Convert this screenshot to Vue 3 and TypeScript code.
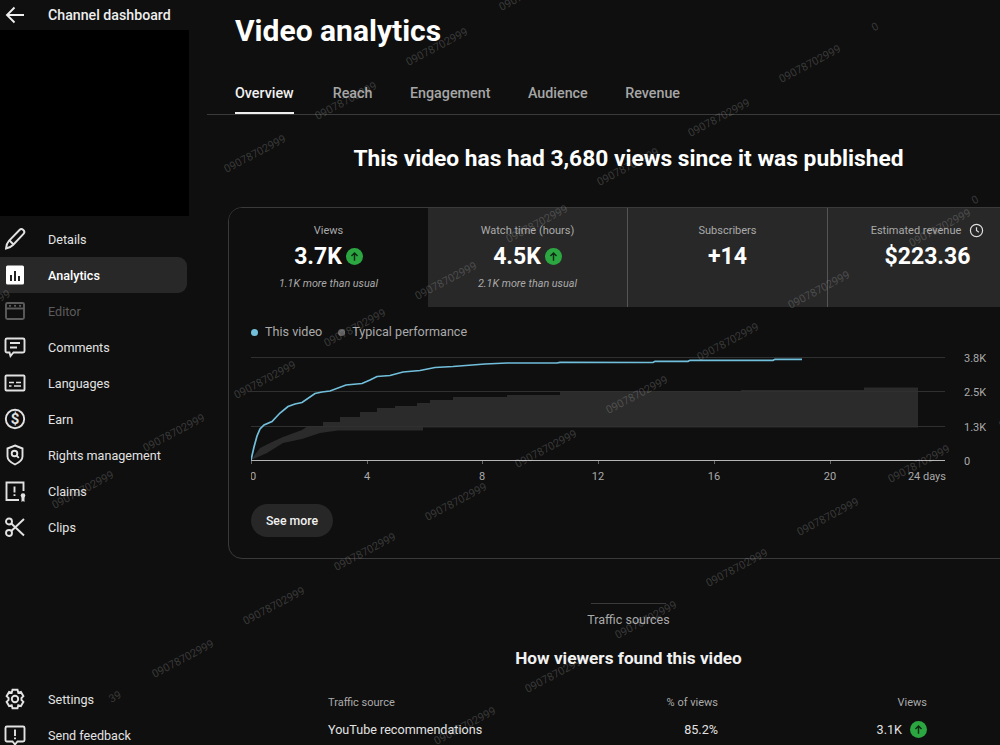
<script setup lang="ts">
type Tile = { label: string; value: string; up?: boolean; note?: string; clock?: boolean }

const navItems = [
  { key: 'details', label: 'Details' },
  { key: 'analytics', label: 'Analytics' },
  { key: 'editor', label: 'Editor' },
  { key: 'comments', label: 'Comments' },
  { key: 'languages', label: 'Languages' },
  { key: 'earn', label: 'Earn' },
  { key: 'rights', label: 'Rights management' },
  { key: 'claims', label: 'Claims' },
  { key: 'clips', label: 'Clips' },
]

const tabs = ['Overview', 'Reach', 'Engagement', 'Audience', 'Revenue']

const tiles: Tile[] = [
  { label: 'Views', value: '3.7K', up: true, note: '1.1K more than usual' },
  { label: 'Watch time (hours)', value: '4.5K', up: true, note: '2.1K more than usual' },
  { label: 'Subscribers', value: '+14' },
  { label: 'Estimated revenue', value: '$223.36', clock: true },
]

// chart coordinates are page px minus the svg origin (251, 350)
const ox = 251
const oy = 350
const curve: [number, number][] = [
  [251, 460], [254, 447], [257, 436], [260, 429], [264, 425], [272, 421.5], [280, 413], [288, 406.5], [295, 404],
  [302, 402.5], [315, 393.5], [322, 392], [330, 391], [346, 385], [362, 383.5], [370, 380], [377, 376.5],
  [390, 375.5], [403, 372], [420, 370.5], [435, 367.5], [453, 366.5], [485, 364], [507, 363], [557, 363],
  [560, 362.3], [653, 362.5], [655, 361.3], [688, 361.3], [690, 360.3], [773, 360.3], [775, 359.3], [802, 359.3],
]
const curvePoints = curve.map(([x, y]) => `${x - ox},${y - oy}`).join(' ')

const typical: [number, number][] = [
  [251, 460], [260, 448], [272, 442], [283, 437], [302, 430], [308, 426], [323, 426], [323, 422], [340, 422], [340, 417],
  [360, 417], [360, 412], [377, 412], [377, 408], [395, 408], [395, 406], [417, 406], [417, 403], [430, 403],
  [430, 400], [453, 400], [453, 397], [507, 397], [507, 395], [560, 395], [560, 392], [741, 392], [741, 390],
  [864, 390], [864, 387.5], [918, 387.5], [918, 427.5], [423, 427.5], [423, 430.5], [338, 430.5], [320, 433],
  [302, 439], [283, 443], [267, 453],
]
const typicalPoints = typical.map(([x, y]) => `${x - ox},${y - oy}`).join(' ')

const gridLines = [
  { y: 7.5, label: '3.8K' },
  { y: 41.5, label: '2.5K' },
  { y: 76.5, label: '1.3K' },
]
const xTicks = [
  { x: 0, label: '0' },
  { x: 116, label: '4' },
  { x: 231, label: '8' },
  { x: 347, label: '12' },
  { x: 463, label: '16' },
  { x: 579, label: '20' },
]

// watermark centres, in page px
const stamps: [number, number][] = [
  [530, -8], [437, 47], [346, 101], [255, 154], [810, 64], [719, 118], [628, 167], [537, 224], [446, 281], [355, 328],
  [265, 380], [174, 433], [83, 490], [819, 290], [728, 342], [637, 395], [546, 449], [456, 502], [365, 552],
  [274, 606], [183, 659], [919, 464], [828, 517], [737, 568], [646, 620], [556, 674], [465, 726], [940, 228], [1030, 410],
]
</script>

<template>
  <div class="page">
    <aside class="side">
      <div class="back">
        <svg class="ico" viewBox="0 0 24 24" fill="none" stroke="currentColor" stroke-width="1.9">
          <path d="M21 12H4M11.5 4.5 4 12l7.500 7.500" />
        </svg>
        <span>Channel dashboard</span>
      </div>
      <div class="thumb"></div>
      <nav class="nav">
        <a
          v-for="item in navItems"
          :key="item.key"
          class="nav-item"
          :class="{ active: item.key === 'analytics', muted: item.key === 'editor' }"
        >
          <svg class="ico" viewBox="0 0 24 24" fill="none" stroke="currentColor" stroke-width="1.9">
            <template v-if="item.key === 'details'">
              <path d="M3 21.500c.2-3 1-5.600 2.900-7.600L16.500 3c1-1 2.700-1 3.800 0s1.200 2.800.2 3.900L10 18c-2 2-4.200 3-7 3.500Z" />
              <path d="m6.500 13.500 4 4" />
            </template>
            <template v-else-if="item.key === 'analytics'">
              <rect x="3" y="2.500" width="18" height="19" rx="1.500" fill="#fff" stroke="none" />
              <path d="M8 12v6M12 8v10M16 13v5" stroke="#222" stroke-width="2" />
            </template>
            <template v-else-if="item.key === 'editor'">
              <rect x="3" y="4" width="18" height="16" rx="1.500" />
              <path d="M3 9.500h18" />
              <path d="M7 6.800h.1M12 6.800h.1M17 6.800h.1" stroke-width="2.200" stroke-linecap="round" />
            </template>
            <template v-else-if="item.key === 'comments'">
              <path d="M4 3.500h16c.8 0 1.500.7 1.500 1.500v11c0 .8-.7 1.500-1.500 1.500H10.500l-3 3.500-1-3.500H4c-.8 0-1.500-.7-1.500-1.500V5c0-.8.7-1.500 1.500-1.500Z" />
              <path d="M7 8h10M7 12.500h7" />
            </template>
            <template v-else-if="item.key === 'languages'">
              <rect x="2.500" y="4.500" width="19" height="15" rx="1" />
              <path d="M6 11.500h5M13 11.500h5M6 15h2.500M11 15h7" stroke-width="1.500" />
            </template>
            <template v-else-if="item.key === 'earn'">
              <circle cx="12" cy="12" r="9.200" />
              <text x="12" y="17.200" text-anchor="middle" class="dollar" fill="currentColor" stroke="none">$</text>
            </template>
            <template v-else-if="item.key === 'rights'">
              <path d="M12 2.500 19.500 5.500v8c0 3.400-3.200 6-7.500 8-4.300-2-7.500-4.600-7.500-8v-8Z" />
              <circle cx="11.500" cy="10.500" r="2.800" />
              <path d="m13.600 12.600 2.200 2.200" />
            </template>
            <template v-else-if="item.key === 'claims'">
              <path d="M20.500 12V3.500H3.500v17.500h12.500" />
              <path d="M11.500 7.500v6M11.500 15.200v1.800" />
              <circle cx="20" cy="16.500" r="2.300" fill="currentColor" stroke="none" />
              <path d="M18.500 18v5l1.500-1 1.500 1v-5" fill="currentColor" stroke="none" />
            </template>
            <template v-else-if="item.key === 'clips'">
              <circle cx="6" cy="6.500" r="3" />
              <circle cx="6" cy="18" r="3" />
              <path d="M8.300 8.500 21 20.500M8.300 16 21 4" />
            </template>
          </svg>
          <span>{{ item.label }}</span>
        </a>
      </nav>
      <div class="nav foot">
        <a class="nav-item">
          <svg class="ico" viewBox="0 0 24 24" fill="none" stroke="currentColor" stroke-width="1.9">
            <path d="M9.500 2.800h5l.8 2.900 2.600-.8 2.500 4.300-2 2 .1.800-.1.800 2 2-2.500 4.300-2.600-.8-.8 2.900h-5l-.8-2.900-2.600.8-2.500-4.300 2-2-.1-.8.1-.8-2-2 2.500-4.300 2.600.8Z" />
            <circle cx="12" cy="12" r="3.200" />
          </svg>
          <span>Settings</span>
        </a>
        <a class="nav-item">
          <svg class="ico" viewBox="0 0 24 24" fill="none" stroke="currentColor" stroke-width="1.9">
            <path d="M4 3.500h16c.8 0 1.500.7 1.500 1.500v12c0 .8-.7 1.500-1.500 1.500h-5.500L12 21.500l-2.500-3H4c-.8 0-1.500-.7-1.500-1.500V5c0-.8.7-1.500 1.500-1.500Z" />
            <path d="M12 6.500v6.500M12 14.500v1.800" />
          </svg>
          <span>Send feedback</span>
        </a>
      </div>
    </aside>

    <main class="main">
      <h1 class="title">Video analytics</h1>
      <div class="tabs">
        <span v-for="(tab, i) in tabs" :key="tab" class="tab" :class="{ on: i === 0 }">{{ tab }}</span>
      </div>
      <h2 class="headline">This video has had 3,680 views since it was published</h2>

      <section class="card">
        <div class="tiles">
          <div v-for="(tile, i) in tiles" :key="tile.label" class="tile" :class="{ first: i === 0 }">
            <div class="tile-label">
              {{ tile.label }}
              <svg v-if="tile.clock" class="clock" viewBox="0 0 16 16" fill="none" stroke="currentColor" stroke-width="1.3">
                <circle cx="8" cy="8" r="6.500" />
                <path d="M8 4.500V8l2.500 1.800" />
              </svg>
            </div>
            <div class="tile-value">
              {{ tile.value }}
              <span v-if="tile.up" class="up">
                <svg viewBox="0 0 18 18"><path d="M9 13.500v-8M5.800 8.500 9 5.200l3.200 3.300" fill="none" stroke="#0f2a14" stroke-width="1.5" /></svg>
              </span>
            </div>
            <div v-if="tile.note" class="tile-note">{{ tile.note }}</div>
          </div>
        </div>

        <div class="chart-wrap">
          <div class="legend">
            <span class="key"><i class="dot blue"></i>This video</span>
            <span class="key"><i class="dot grey"></i>Typical performance</span>
          </div>
          <svg class="chart" width="749" height="135" viewBox="0 0 749 135">
            <polygon :points="typicalPoints" fill="#2b2b2b" />
            <line v-for="g in gridLines" :key="g.y" x1="0" x2="694" :y1="g.y" :y2="g.y" stroke="#303030" />
            <line x1="0" x2="694" y1="110.5" y2="110.5" stroke="#b5b5b5" />
            <line v-for="t in xTicks" :key="t.x" :x1="t.x + 0.5" :x2="t.x + 0.5" y1="111" y2="114" stroke="#666" />
            <polyline :points="curvePoints" fill="none" stroke="#72bfdc" stroke-width="1.7" />
            <text v-for="g in gridLines" :key="g.label" x="713" :y="g.y + 4" class="axis">{{ g.label }}</text>
            <text x="713" y="115" class="axis">0</text>
            <text v-for="t in xTicks" :key="t.label" :x="t.x === 0 ? 2 : t.x" y="130" text-anchor="middle" class="axis">{{ t.label }}</text>
            <text x="695" y="130" text-anchor="end" class="axis">24 days</text>
          </svg>
          <button class="more">See more</button>
        </div>
      </section>

      <div class="rule"></div>
      <div class="section-name">Traffic sources</div>
      <h3 class="section-title">How viewers found this video</h3>
      <div class="table">
        <div class="row head">
          <span>Traffic source</span>
          <span class="pct">% of views</span>
          <span class="num">Views</span>
        </div>
        <div class="row">
          <span>YouTube recommendations</span>
          <span class="pct">85.2%</span>
          <span class="num">3.1K<span class="up">
            <svg viewBox="0 0 18 18"><path d="M9 13.500v-8M5.800 8.500 9 5.200l3.200 3.300" fill="none" stroke="#0f2a14" stroke-width="1.5" /></svg>
          </span></span>
        </div>
      </div>
    </main>

    <div class="stamps">
      <span
        v-for="(s, i) in stamps"
        :key="i"
        class="stamp"
        :style="{ left: s[0] + 'px', top: s[1] + 'px' }"
      >09078702999</span>
      <span class="stamp" style="left: 875px; top: 27px">0</span>
      <span class="stamp" style="left: 975px; top: 200px">0</span>
      <span class="stamp" style="left: 115px; top: 697px">39</span>
      <span class="stamp" style="left: 4px; top: 296px">99</span>
    </div>
  </div>
</template>

<style>
html, body {
  margin: 0;
  background: #0f0f0f;
  overflow: hidden;
}
</style>

<style scoped>
.page {
  position: relative;
  display: flex;
  width: 1000px;
  height: 745px;
  overflow: hidden;
  background: #0f0f0f;
  color: #f1f1f1;
  font-family: Roboto, "Liberation Sans", sans-serif;
}
.side {
  flex: 0 0 207px;
  display: flex;
  flex-direction: column;
  height: 753px;
}
.back {
  display: flex;
  align-items: center;
  height: 30px;
  font-size: 14.2px;
  font-weight: 500;
  color: #eee;
}
.back .ico {
  margin: 0 21px 0 3px;
}
.thumb {
  width: 189px;
  height: 186px;
  background: #000;
  margin-bottom: 5px;
}
.nav {
  display: flex;
  flex-direction: column;
}
.foot {
  margin-top: auto;
}
.nav-item {
  display: flex;
  align-items: center;
  width: 187px;
  height: 36px;
  box-sizing: border-box;
  font-size: 12.6px;
  color: #e2e2e2;
  border-radius: 0 9px 9px 0;
}
.nav-item .ico {
  margin: 0 21px 0 3px;
}
.ico {
  width: 24px;
  height: 24px;
  flex: none;
}
.dollar {
  font-size: 15px;
  font-weight: 700;
}
.nav-item.active {
  background: #282828;
  color: #fff;
  font-weight: 500;
}
.nav-item.muted {
  color: #5c5c5c;
}
.main {
  flex: 0 0 842px;
  display: flex;
  flex-direction: column;
}
.title {
  margin: 12px 0 0 28px;
  font-size: 30px;
  line-height: 38px;
  font-weight: 700;
  color: #fff;
}
.tabs {
  display: flex;
  gap: 37.5px;
  height: 65px;
  padding-left: 28px;
  border-bottom: 1px solid #3a3a3a;
  box-sizing: border-box;
}
.tab {
  padding-top: 35px;
  font-size: 14.3px;
  font-weight: 500;
  color: #a6a6a6;
}
.tab.on {
  margin-right: 1.5px;
  color: #f1f1f1;
  border-bottom: 2px solid #eee;
}
.headline {
  margin: 28px 0 0;
  text-align: center;
  font-size: 22.75px;
  line-height: 32px;
  font-weight: 700;
  color: #fff;
}
.card {
  margin: 32px 21px 0;
  height: 352px;
  box-sizing: border-box;
  border: 1px solid #3a3a3a;
  border-radius: 14px;
  overflow: hidden;
}
.tiles {
  display: grid;
  grid-template-columns: 199px repeat(3, 200px);
  height: 99px;
}
.tile {
  background: #282828;
  border-right: 1px solid #555;
  text-align: center;
  padding-top: 15px;
  box-sizing: border-box;
}
.tile.first {
  background: #0f0f0f;
  border-right: 0;
}
.tile-label {
  display: flex;
  justify-content: center;
  align-items: center;
  gap: 8px;
  height: 14px;
  font-size: 11px;
  color: #aaa;
}
.clock {
  width: 15px;
  height: 15px;
  color: #ddd;
}
.tile-value {
  display: flex;
  justify-content: center;
  align-items: center;
  gap: 4px;
  margin-top: 5px;
  height: 28px;
  font-size: 23px;
  font-weight: 700;
  color: #fff;
}
.up {
  display: inline-block;
  width: 17px;
  height: 17px;
  border-radius: 50%;
  background: #2ba640;
}
.up svg {
  display: block;
  width: 17px;
  height: 17px;
}
.tile-note {
  margin-top: 7px;
  font-size: 10.8px;
  font-style: italic;
  color: #aaa;
}
.chart-wrap {
  padding: 16px 0 0 22px;
}
.legend {
  display: flex;
  gap: 16px;
  height: 18px;
  font-size: 12.6px;
  line-height: 18px;
  color: #aaa;
}
.key {
  display: flex;
  align-items: center;
}
.dot {
  width: 7px;
  height: 7px;
  border-radius: 50%;
  margin-right: 7px;
}
.dot.blue {
  background: #72bfdc;
}
.dot.grey {
  background: #606060;
}
.chart {
  display: block;
  margin-top: 9px;
}
.axis {
  font-size: 11px;
  fill: #aaa;
  font-family: Roboto, "Liberation Sans", sans-serif;
}
.more {
  display: block;
  margin-top: 19px;
  width: 82px;
  height: 33px;
  border: 0;
  border-radius: 17px;
  background: #272727;
  color: #f1f1f1;
  font: 500 12.3px Roboto, "Liberation Sans", sans-serif;
}
.rule {
  width: 75px;
  height: 1px;
  margin: 44px auto 0;
  background: #3a3a3a;
}
.section-name {
  margin-top: 8px;
  text-align: center;
  font-size: 12.5px;
  line-height: 16px;
  color: #aaa;
}
.section-title {
  margin: 20px 0 0;
  text-align: center;
  font-size: 17.2px;
  line-height: 20px;
  font-weight: 700;
  color: #f1f1f1;
}
.table {
  margin: 25px 0 0 121px;
  width: 599px;
}
.row {
  display: grid;
  grid-template-columns: 1fr 120px 209px;
  align-items: center;
  height: 27px;
  font-size: 12.6px;
  color: #e2e2e2;
}
.row.head {
  height: 18px;
  margin-bottom: 5px;
  font-size: 11px;
  color: #aaa;
}
.pct {
  text-align: right;
}
.num {
  display: flex;
  justify-content: flex-end;
  align-items: center;
}
.num .up {
  margin-left: 8px;
}
.stamps {
  position: absolute;
  inset: 0;
  pointer-events: none;
}
.stamp {
  position: absolute;
  transform: translate(-50%, -50%) rotate(-28deg);
  font-size: 11px;
  white-space: nowrap;
  color: rgba(255, 255, 255, 0.18);
}
</style>
